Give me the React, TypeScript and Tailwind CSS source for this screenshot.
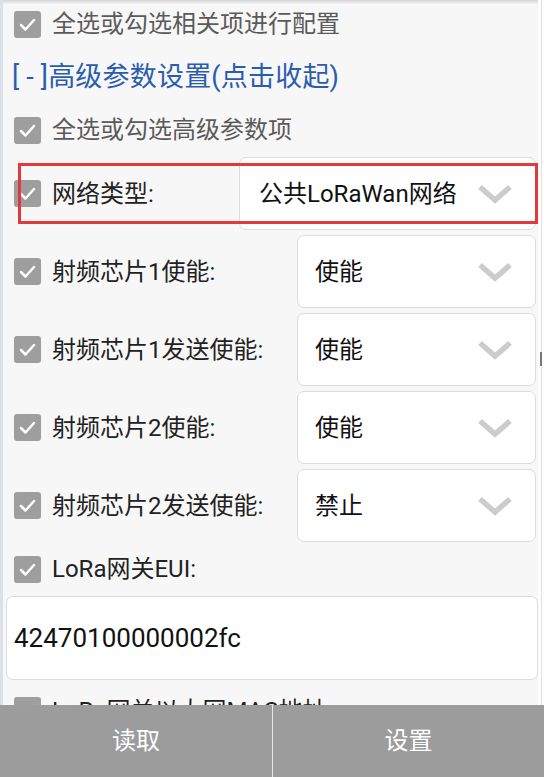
import React from "react";

const Check = () => (
  <div className="w-[27px] h-[27px] rounded-[3px] bg-[#9e9e9e] flex items-center justify-center shrink-0">
    <svg width="19" height="19" viewBox="0 0 19 19" fill="none">
      <polyline points="3,10 7.5,14.5 16,5" stroke="#ffffff" strokeWidth="2.5" strokeLinecap="round" strokeLinejoin="round" />
    </svg>
  </div>
);

const Chevron = () => (
  <svg width="36" height="22" viewBox="0 0 36 22" fill="none" className="shrink-0">
    <polyline points="3,4 18,17 33,4" stroke="#cccccc" strokeWidth="5.5" strokeLinejoin="miter" />
  </svg>
);

const SelectRow = ({ label, value, wide }: { label: string; value: string; wide?: boolean }) => (
  <div className="flex items-center h-[73px] mt-[5px] first:mt-0">
    <Check />
    <span className="ml-[11px] text-[24px] leading-none text-[#222]">{label}</span>
    <div className="flex-1" />
    <div
      className={
        (wide ? "w-[297px] pl-[19px] " : "w-[239px] pl-[17px] ") +
        "h-[73px] mr-[2px] bg-white border border-[#dcdcdc] rounded-[7px] flex items-center justify-between pr-[22px]"
      }
    >
      <span className="text-[24px] leading-none text-[#111]">{value}</span>
      <Chevron />
    </div>
  </div>
);

export default function App() {
  return (
    <div className="relative w-[544px] h-[777px] overflow-hidden flex bg-[#f7f7f7] font-['Roboto','Noto_Sans_CJK_SC',sans-serif]">
      <div className="w-[3px] bg-[#dbe0ea] shrink-0" />
      <div className="flex-1 flex flex-col">
        <div className="h-[4px] bg-gradient-to-b from-[#d4d4d4] to-[#f3f3f3]" />
        <div className="flex flex-col pl-[11px]">
          <div className="flex items-center h-[40px]">
            <Check />
            <span className="ml-[11px] text-[24px] leading-none text-[#5a5a5a]">全选或勾选相关项进行配置</span>
          </div>
          <div className="flex items-center h-[66px] -ml-[2px]">
            <span className="text-[27px] leading-none text-[#2a5caf] tracking-[0.2px]">[ - ]高级参数设置(点击收起)</span>
          </div>
          <div className="flex items-center h-[40px]">
            <Check />
            <span className="ml-[11px] text-[24px] leading-none text-[#5a5a5a]">全选或勾选高级参数项</span>
          </div>
          <div className="flex flex-col mt-[7px]">
            <SelectRow label="网络类型:" value="公共LoRaWan网络" wide />
            <SelectRow label="射频芯片1使能:" value="使能" />
            <SelectRow label="射频芯片1发送使能:" value="使能" />
            <SelectRow label="射频芯片2使能:" value="使能" />
            <SelectRow label="射频芯片2发送使能:" value="禁止" />
          </div>
          <div className="flex items-center h-[54px]">
            <Check />
            <span className="ml-[11px] text-[24px] leading-none text-[#222]">LoRa网关EUI:</span>
          </div>
        </div>
        <div className="pl-[3px] pr-0">
          <div className="h-[84px] bg-white border border-[#dcdcdc] rounded-[7px] flex items-center pl-[7px]">
            <span className="text-[26px] leading-none text-[#111]">42470100000002fc</span>
          </div>
        </div>
        <div className="flex items-center pl-[11px] mt-[17px]">
          <Check />
          <span className="ml-[11px] text-[24px] leading-none text-[#222]">LoRa网关以太网MAC地址</span>
        </div>
      </div>
      <div className="w-[6px] shrink-0 bg-[#fdfdfd] flex justify-center">
        <div className="w-[1px] bg-[#e2e2e2]" />
      </div>

      <div className="absolute left-[18px] top-[163px] w-[520px] h-[61px] border-[3px] border-[#e23a3a]" />
      <div className="absolute right-[2px] top-[352px] w-[2px] h-[14px] bg-[#777]" />

      <div className="absolute left-0 right-0 bottom-0 h-[72px] flex bg-[#9c9c9c]">
        <div className="w-[272px] flex items-center justify-center text-white text-[24px] leading-none">读取</div>
        <div className="w-[1px] bg-[#e8e8e8]" />
        <div className="flex-1 flex items-center justify-center text-white text-[24px] leading-none">设置</div>
      </div>
    </div>
  );
}
